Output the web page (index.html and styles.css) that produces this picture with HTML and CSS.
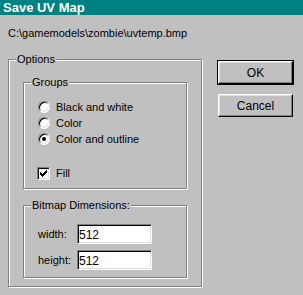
FILE: index.html
```html
<!DOCTYPE html>
<html lang="en">
<head>
    <meta charset="UTF-8">
    <title>Save UV Map</title>
    <link rel="stylesheet" href="styles.css">
</head>
<body>
    <div class="window">
        <div class="titlebar">Save UV Map</div>
        <div class="path">C:\gamemodels\zombie\uvtemp.bmp</div>
        <div class="row">
            <div class="group options">
                <span class="group-title">Options</span>
                <div class="group groups">
                    <span class="group-title">Groups</span>
                    <div class="choices">
                        <label class="choice"><span class="radio"></span>Black and white</label>
                        <label class="choice"><span class="radio"></span>Color</label>
                        <label class="choice"><span class="radio checked"></span>Color and outline</label>
                    </div>
                    <label class="choice fill">
                        <span class="checkbox">
                            <svg width="7" height="7" viewBox="0 0 7 7"><path d="M0 2h1v1h1v1h1v-1h1v-1h1v-1h1v-1h1v3h-1v1h-1v1h-1v1h-1v1h-1v-1h-1v-1h-1v-1h-1z" fill="#000"/></svg>
                        </span>Fill
                    </label>
                </div>
                <div class="group bitmap">
                    <span class="group-title">Bitmap Dimensions:</span>
                    <div class="field">
                        <label for="w">width:</label>
                        <input id="w" type="text" value="512">
                    </div>
                    <div class="field">
                        <label for="h">height:</label>
                        <input id="h" type="text" value="512">
                    </div>
                </div>
            </div>
            <div class="buttons">
                <button class="btn default">OK</button>
                <button class="btn">Cancel</button>
            </div>
        </div>
    </div>
</body>
</html>
```
FILE: styles.css
```css
body {
    margin: 0;
    font-family: "Liberation Sans", Arial, sans-serif;
    font-size: 11px;
    color: #000;
    background-color: #c0c0c0;
}
.window {
    width: 303px;
    height: 295px;
    background-color: #c0c0c0;
    overflow: hidden;
}
.titlebar {
    height: 15px;
    line-height: 15px;
    padding-left: 3px;
    background-color: #008080;
    color: #fff;
    font-weight: bold;
    font-size: 13px;
}
.path {
    margin: 12px 0 0 8px;
    line-height: 13px;
    height: 13px;
}
.row {
    display: flex;
    margin-top: 19px;
    margin-left: 8px;
}
.group {
    position: relative;
    box-sizing: border-box;
    border: 1px solid #808080;
    box-shadow: 1px 1px 0 #fff, inset 1px 1px 0 #fff;
}
.group-title {
    position: absolute;
    top: -7px;
    left: 7px;
    padding: 0 1px;
    line-height: 13px;
    background-color: #c0c0c0;
    white-space: nowrap;
}
.options {
    width: 194px;
    height: 228px;
    padding: 22px 14px 8px 14px;
}
.groups {
    height: 107px;
    padding: 16px 0 0 14px;
}
.choices {
    display: flex;
    flex-direction: column;
}
.choice {
    display: flex;
    align-items: center;
    height: 16px;
    gap: 6px;
}
.radio {
    box-sizing: border-box;
    width: 12px;
    height: 12px;
    border-radius: 50%;
    border: 1px solid;
    border-color: #808080 #fff #fff #808080;
    background-color: #fff;
    box-shadow: inset 1px 1px 0 #000, inset -1px -1px 0 #dfdfdf;
    display: flex;
    align-items: center;
    justify-content: center;
}
.radio.checked::after {
    content: "";
    width: 4px;
    height: 4px;
    border-radius: 50%;
    background-color: #000;
}
.fill {
    margin-top: 18px;
    margin-left: -1px;
}
.checkbox {
    box-sizing: border-box;
    width: 13px;
    height: 13px;
    border: 1px solid;
    border-color: #808080 #fff #fff #808080;
    background-color: #fff;
    box-shadow: inset 1px 1px 0 #000, inset -1px -1px 0 #dfdfdf;
    display: flex;
    align-items: center;
    justify-content: center;
}
.bitmap {
    height: 73px;
    margin-top: 16px;
    padding: 18px 0 0 14px;
}
.field {
    display: flex;
    align-items: center;
    height: 20px;
    margin-bottom: 6px;
}
.field label {
    width: 39px;
}
.field input {
    box-sizing: border-box;
    width: 75px;
    height: 20px;
    margin: 0;
    padding: 1px 0 0 1px;
    border: 1px solid;
    border-color: #808080 #fff #fff #808080;
    box-shadow: inset 1px 1px 0 #000, inset -1px -1px 0 #dfdfdf;
    background-color: #fff;
    font-family: "Liberation Sans", Arial, sans-serif;
    font-size: 12px;
    color: #000;
    outline: none;
}
.buttons {
    display: flex;
    flex-direction: column;
    margin-left: 16px;
    padding-top: 2px;
    gap: 10px;
}
.btn {
    box-sizing: border-box;
    width: 75px;
    height: 23px;
    margin: 0;
    padding: 0;
    border: 1px solid;
    border-color: #fff #000 #000 #fff;
    box-shadow: inset -1px -1px 0 #808080, inset 1px 1px 0 #dfdfdf;
    background-color: #c0c0c0;
    font-family: "Liberation Sans", Arial, sans-serif;
    font-size: 12px;
    color: #000;
}
.btn.default {
    outline: 1px solid #000;
}
```
